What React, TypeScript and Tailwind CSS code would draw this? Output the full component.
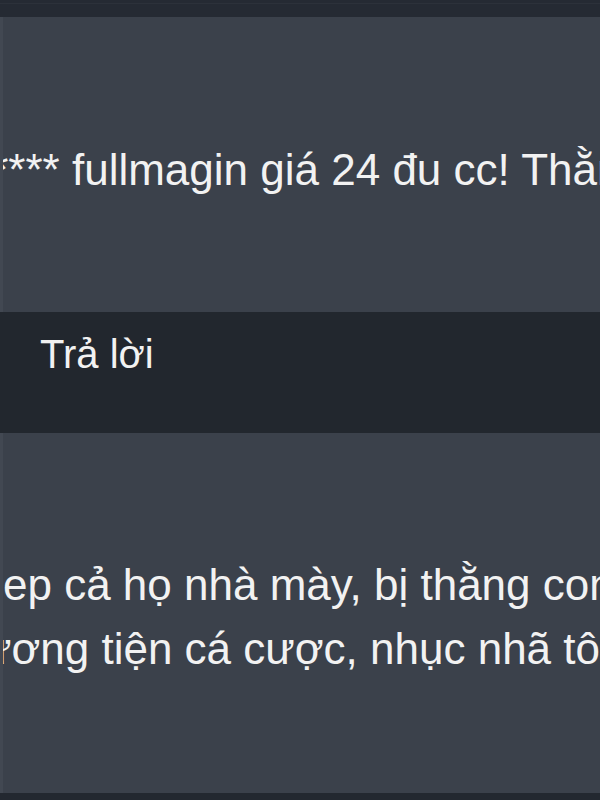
export default function App() {
  return (
    <div className="h-[800px] w-[600px] overflow-hidden bg-[#232830] font-['Liberation_Sans',Arial,sans-serif] text-[#f2f2f2]">
      <div className="h-[17px] bg-[#252a33] pt-[3px]">
        <div className="h-px bg-[#2c313a]" />
      </div>

      <div className="h-[295px] overflow-hidden border-l-[3px] border-[#424852] bg-[#3b414b] pt-[121px]">
        <p className="ml-[-46px] whitespace-nowrap text-[44px] leading-[63px]">
          ****** fullmagin giá 24 đu cc! Thằng
        </p>
      </div>

      <div className="h-[121px] bg-[#22272e] pl-[40px] pt-[11px]">
        <span className="text-[40px] leading-[63px]">Trả lời</span>
      </div>

      <div className="h-[360px] overflow-hidden border-l-[3px] border-[#424852] bg-[#3b414b] pt-[120px] text-[44px] leading-[64px]">
        <p className="whitespace-nowrap">ep cả họ nhà mày, bị thằng con</p>
        <p className="ml-[-70px] whitespace-nowrap">phương tiện cá cược, nhục nhã tôi</p>
      </div>
    </div>
  );
}
